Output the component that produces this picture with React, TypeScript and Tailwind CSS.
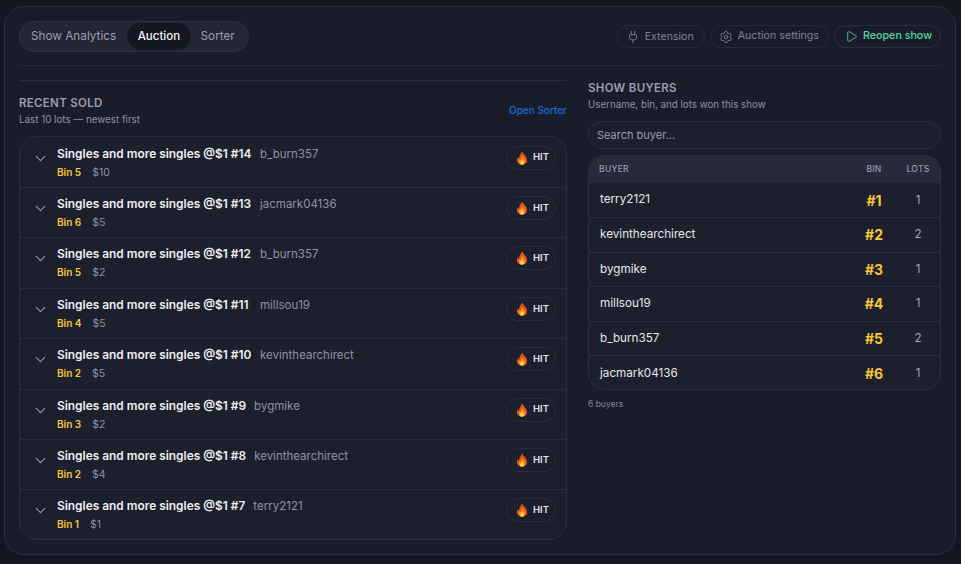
import { ChevronDown, Plug, Settings, Play } from 'lucide-react'

const LOTS = [
  { lot: 14, user: 'b_burn357', bin: 5, price: 10 },
  { lot: 13, user: 'jacmark04136', bin: 6, price: 5 },
  { lot: 12, user: 'b_burn357', bin: 5, price: 2 },
  { lot: 11, user: 'millsou19', bin: 4, price: 5 },
  { lot: 10, user: 'kevinthearchirect', bin: 2, price: 5 },
  { lot: 9, user: 'bygmike', bin: 3, price: 2 },
  { lot: 8, user: 'kevinthearchirect', bin: 2, price: 4 },
  { lot: 7, user: 'terry2121', bin: 1, price: 1 },
]

const BUYERS = [
  { name: 'terry2121', bin: 1, lots: 1 },
  { name: 'kevinthearchirect', bin: 2, lots: 2 },
  { name: 'bygmike', bin: 3, lots: 1 },
  { name: 'millsou19', bin: 4, lots: 1 },
  { name: 'b_burn357', bin: 5, lots: 2 },
  { name: 'jacmark04136', bin: 6, lots: 1 },
]

function Flame() {
  return (
    <svg viewBox="0 0 12 14" className="w-[12px] h-[14px] shrink-0">
      <path d="M6.2.4C6.8 2.6 9 3.6 10.2 6c1 2 1.2 3.6.4 5.2C9.8 12.8 8 13.7 6 13.7s-3.9-.9-4.7-2.6C.5 9.5.8 7.7 1.8 6.3c.2.8.6 1.3 1.2 1.6C2.8 5 4.6 3 6.2.4z" fill="#e2531c" />
      <path d="M6.3 5c.4 1.5 2.9 2.7 2.9 5.2 0 2-1.4 3.4-3.2 3.4s-3.2-1.4-3.2-3.2c0-1 .5-1.8 1.1-2.4.2.5.4.8.8 1C4.7 7.7 5.3 6.4 6.3 5z" fill="#f79321" />
      <path d="M6.1 8.8c.4.9 1.7 1.5 1.7 2.9 0 1.1-.8 1.9-1.8 1.9s-1.8-.8-1.8-1.9c0-1.2 1.3-1.8 1.9-2.9z" fill="#ffd65a" />
    </svg>
  )
}

function LotRow({ lot, user, bin, price }: (typeof LOTS)[number]) {
  return (
    <div className="h-[50.43px] flex items-start border-b border-[#2a2e3f] last:border-b-0 pl-[11.5px] pr-[10px]">
      <ChevronDown className="w-[17px] h-[17px] text-[#9a9eb0] mt-[12px] shrink-0" strokeWidth={1.5} />
      <div className="ml-[8.5px] flex-1 min-w-0 pt-[8px]">
        <div className="flex items-baseline gap-[8px] leading-[16px]">
          <span className={lot >= 10 ? 'w-[195px] text-[11.9px] font-semibold text-[#eff0f4]' : 'text-[11.9px] font-semibold text-[#eff0f4]'}>
            Singles and more singles @$1 #{lot}
          </span>
          <span className="text-[11.5px] text-[#8e92a5]">{user}</span>
        </div>
        <div className="flex items-baseline gap-[11px] mt-[3px] leading-[14px]">
          <span className="text-[10px] font-semibold text-[#fbc831]">Bin {bin}</span>
          <span className="text-[10.5px] text-[#8e92a5]">${price}</span>
        </div>
      </div>
      <div className="mt-[8px] w-[50px] h-[24px] rounded-full border border-[#2a2e3f] bg-[#1c1f2c] flex items-center pl-[9px] gap-[5px]">
        <Flame />
        <span className="text-[9.5px] font-semibold text-[#e4e5ea]">HIT</span>
      </div>
    </div>
  )
}

function BuyerRow({ name, bin, lots }: (typeof BUYERS)[number]) {
  return (
    <div className="h-[34.6px] flex items-center border-b border-[#2a2e3f] last:border-b-0 pl-[11px]">
      <span className="flex-1 text-[11.7px] text-[#e6e7ec]">{name}</span>
      <span className="w-[44px] text-center text-[14px] font-bold text-[#fbc831]">#{bin}</span>
      <span className="w-[44px] text-center text-[11.5px] text-[#a5a8ba]">{lots}</span>
    </div>
  )
}

export default function App() {
  return (
    <div
      className="w-[961px] h-[564px] overflow-hidden bg-[#141622] pt-[6px] pl-[4px]"
      style={{ fontFamily: 'Inter, "Noto Sans", sans-serif' }}
    >
      <div className="w-[952px] h-[549px] rounded-[20px] border border-[#2a2e3f] bg-[#1a1d29] px-[14px] pt-[14px]">
        <div className="h-[45px] flex items-start justify-between border-b border-[#252836]">
          <div className="h-[31px] flex items-center rounded-full border border-[#2c3041] bg-[#232634] px-[1px]">
            <span className="pl-[10px] pr-[11px] text-[11.75px] text-[#9a9eb0]">Show Analytics</span>
            <span className="h-[27px] flex items-center rounded-full bg-[#151722] px-[10.5px] text-[11.5px] font-medium text-[#f0f1f5]">Auction</span>
            <span className="pl-[10px] pr-[12px] text-[11.75px] text-[#9a9eb0]">Sorter</span>
          </div>
          <div className="flex items-center gap-[5px] mt-[4px]">
            <div className="h-[23px] flex items-center gap-[5px] rounded-full border border-[#272a39] pl-[8px] pr-[10px] text-[10.6px] text-[#7f8396]">
              <Plug className="w-[14px] h-[14px]" strokeWidth={1.5} />
              Extension
            </div>
            <div className="h-[23px] flex items-center gap-[5px] rounded-full border border-[#272a39] pl-[8px] pr-[9px] text-[10.7px] text-[#7f8396]">
              <Settings className="w-[14px] h-[14px]" strokeWidth={1.5} />
              Auction settings
            </div>
            <div className="h-[23px] flex items-center gap-[5px] rounded-full border border-[#2a2e3f] pl-[10px] pr-[8px] text-[10.7px] font-medium text-[#4fdba6]">
              <Play className="w-[13px] h-[13px]" strokeWidth={1.5} />
              Reopen show
            </div>
          </div>
        </div>

        <div className="flex gap-[21px]">
          <div className="w-[548px]">
            <div className="mt-[14px] border-t border-[#2a2e3f] pt-[15px] flex items-end justify-between">
              <div>
                <div className="text-[11.5px] leading-[14px] font-semibold tracking-[0.3px] text-[#9a9eb0]">RECENT SOLD</div>
                <div className="text-[9.8px] leading-[12px] mt-[4px] text-[#8e92a5]">Last 10 lots — newest first</div>
              </div>
              <span className="text-[10px] font-medium text-[#0b6fe0] mb-[8px]">Open Sorter</span>
            </div>
            <div className="mt-[10px] h-[404px] overflow-hidden rounded-[18px] border border-[#2a2e3f] bg-[#1c1f2c] pt-[0.5px]">
              {LOTS.map(l => (
                <LotRow key={l.lot} {...l} />
              ))}
            </div>
          </div>

          <div className="w-[353px]">
            <div className="mt-[15px] text-[11.5px] leading-[14px] font-semibold tracking-[0.3px] text-[#9a9eb0]">SHOW BUYERS</div>
            <div className="text-[9.75px] leading-[12px] mt-[4px] text-[#8e92a5]">Username, bin, and lots won this show</div>
            <div className="mt-[10px] h-[28px] flex items-center rounded-full border border-[#2a2e3f] bg-[#1c1f2c] px-[8px] text-[11px] text-[#9a9eb0]">
              Search buyer...
            </div>
            <div className="mt-[6px] h-[234.5px] rounded-[16px] border border-[#2a2e3f] overflow-hidden bg-[#1c1f2c]">
              <div className="h-[27.4px] flex items-center bg-[#272a3a] pl-[10px] text-[8.5px] font-medium tracking-[0.3px] text-[#9a9eb0]">
                <span className="flex-1">BUYER</span>
                <span className="w-[44px] text-center">BIN</span>
                <span className="w-[44px] text-center">LOTS</span>
              </div>
              {BUYERS.map(b => (
                <BuyerRow key={b.name} {...b} />
              ))}
            </div>
            <div className="mt-[8px] text-[8.5px] text-[#7f8396]">6 buyers</div>
          </div>
        </div>
      </div>
    </div>
  )
}
